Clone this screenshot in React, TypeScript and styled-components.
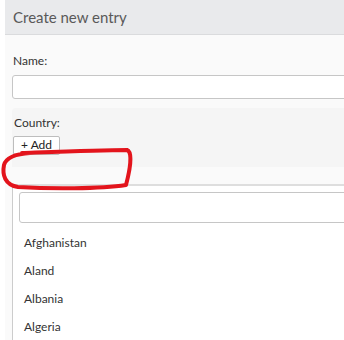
import React from "react";
import styled, { createGlobalStyle } from "styled-components";

const GlobalStyle = createGlobalStyle`
  html, body {
    margin: 0;
    padding: 0;
    background: #ffffff;
    overflow: hidden;
    font-family: Lato, "Open Sans", sans-serif;
  }
`;

const Page = styled.div`
  position: relative;
  width: 420px;
  margin-left: 5px;
  height: 340px;
  background: #fafafa;
`;

const Header = styled.div`
  height: 34px;
  display: flex;
  align-items: center;
  padding-left: 8px;
  background: #e9eaec;
  border-bottom: 1px solid #dadbdd;
`;

const Title = styled.h1`
  margin: 0;
  font-size: 15px;
  font-weight: 400;
  color: #595959;
`;

const Body = styled.div`
  padding: 0 0 0 7px;
`;

const Label = styled.div`
  font-size: 12px;
  color: #333;
  line-height: 16px;
  padding-left: 1px;
`;

const NameLabel = styled(Label)`
  padding-top: 18px;
  padding-bottom: 6px;
`;

const TextInput = styled.div<{ $h: number }>`
  height: ${(p) => p.$h}px;
  box-sizing: border-box;
  background: #ffffff;
  border: 1px solid #c6c6c6;
  border-radius: 3px;
`;

const CountryPanel = styled.div`
  margin-top: 9px;
  background: #f5f5f5;
  border-radius: 4px 0 0 0;
  padding: 7px 0 12px 1px;
  height: 40px;
`;

const AddButton = styled.button`
  display: block;
  margin-top: 5px;
  height: 19px;
  padding: 0 7px 2px;
  font-family: Lato, "Open Sans", sans-serif;
  font-size: 12px;
  color: #222;
  background: #ffffff;
  border: 1px solid #bdbdbd;
  border-radius: 2px;
  line-height: 14px;
`;

const Dropdown = styled.div`
  margin-top: 17px;
  background: #ffffff;
  border-top: 2px solid #dedede;
  border-left: 1px solid #cccccc;
  padding: 6px 0 0 6px;
`;

const List = styled.ul`
  list-style: none;
  margin: 0;
  padding: 6px 0 0 5px;
`;

const Item = styled.li`
  font-size: 12px;
  color: #333;
  height: 28px;
  line-height: 28px;
`;

const Scribble = styled.svg`
  position: absolute;
  left: -5px;
  top: 0;
  pointer-events: none;
`;

const countries = ["Afghanistan", "Aland", "Albania", "Algeria"];

const App = () => (
  <Page>
    <GlobalStyle />
    <Header>
      <Title>Create new entry</Title>
    </Header>
    <Body>
      <NameLabel>Name:</NameLabel>
      <TextInput $h={24} />
      <CountryPanel>
        <Label>Country:</Label>
        <AddButton>+ Add</AddButton>
      </CountryPanel>
      <Dropdown>
        <TextInput $h={31} />
        <List>
          {countries.map((c) => (
            <Item key={c}>{c}</Item>
          ))}
        </List>
      </Dropdown>
    </Body>
    <Scribble width="344" height="340" viewBox="0 0 344 340">
      <path
        d="M 22 153 C 50 152 100 150 127 150 C 133 152 130 170 126 185 C 100 189 50 189 18 187 C 5 185 2 175 4 165 C 6 158 14 154 30 153"
        fill="none"
        stroke="#e3141c"
        strokeWidth="4"
        strokeLinecap="round"
        strokeLinejoin="round"
      />
    </Scribble>
  </Page>
);

export default App;
